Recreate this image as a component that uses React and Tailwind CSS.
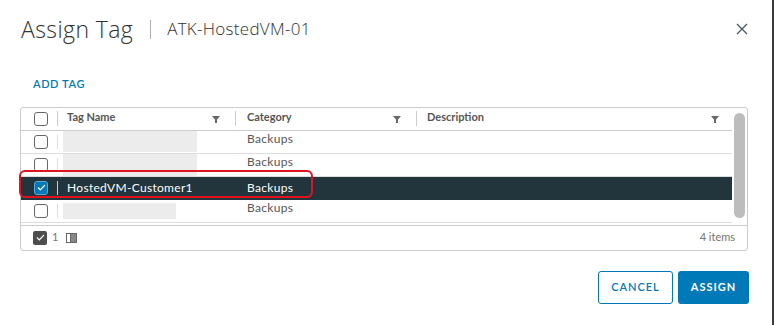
import { useState } from "react";

const rows = [
  { id: 1, name: "", category: "Backups", blur: "w-[134px] h-[21px]" },
  { id: 2, name: "", category: "Backups", blur: "w-[134px] h-[22px]" },
  { id: 3, name: "HostedVM-Customer1", category: "Backups" },
  { id: 4, name: "", category: "Backups", blur: "w-[113px] h-[16px]" },
];

const FilterIcon = () => (
  <svg width="8" height="8" viewBox="0 0 8 8" className="text-[#666]">
    <path d="M0 1h8L5 4.5V8H3V4.5z" fill="currentColor" />
  </svg>
);

const Check = ({ color = "#fff" }) => (
  <svg width="9" height="7" viewBox="0 0 9 7">
    <path d="M1 3.5l2.3 2.3L8 1" stroke={color} strokeWidth="1.2" fill="none" />
  </svg>
);

const Box = ({ checked }) =>
  checked ? (
    <div className="w-[14px] h-[14px] rounded-[3px] bg-[#0079b8] border border-[#5aa9d6] flex items-center justify-center">
      <Check />
    </div>
  ) : (
    <div className="w-[14px] h-[14px] rounded-[3px] border border-[#666] bg-white" />
  );

const App = () => {
  const [selected] = useState(3);

  return (
    <div className="w-[774px] h-[325px] bg-white flex font-['Lato',sans-serif] text-[#565656]">
      <div className="flex-1 flex flex-col">
        {/* header */}
        <div className="flex items-center pl-[21px] pr-[24px] pt-[14px] h-[44px] font-['Open_Sans',sans-serif]">
          <h1 className="text-[23px] font-light tracking-[0.4px] text-[#313131]">Assign Tag</h1>
          <div className="w-px h-[19px] bg-[#b0b0b0] ml-[17px] mr-[16px]" />
          <span className="text-[17px] font-light tracking-[0.3px] text-[#313131]">ATK-HostedVM-01</span>
          <button className="ml-auto text-[#49555f]">
            <svg width="12" height="12" viewBox="0 0 12 12">
              <path d="M1 1l10 10M11 1L1 11" stroke="currentColor" strokeWidth="1.3" />
            </svg>
          </button>
        </div>

        <div className="pl-[33px] mt-[32px] text-[11px] font-semibold tracking-[0.6px] text-[#0079b8]">
          ADD TAG
        </div>

        {/* datagrid */}
        <div className="ml-[20px] mt-[14px] w-[728px] h-[144px] border border-[#ccc] rounded-[3px] flex flex-col relative">
          <div className="flex flex-1 min-h-0">
            <div className="flex-1 flex flex-col">
              <div className="flex items-center h-[23px] border-b border-[#ccc] text-[11px] font-bold text-[#565656]">
                <div className="w-[36px] pl-[13px] flex items-center"><Box /></div>
                <div className="w-px h-[15px] bg-[#ccc]" />
                <div className="w-[177px] pl-[9px] pr-[15px] flex items-center justify-between">
                  <span className="-mt-[3px]">Tag Name</span>
                  <FilterIcon />
                </div>
                <div className="w-px h-[15px] bg-[#ccc]" />
                <div className="w-[180px] pl-[11px] pr-[15px] flex items-center justify-between">
                  <span className="-mt-[3px]">Category</span>
                  <FilterIcon />
                </div>
                <div className="w-px h-[15px] bg-[#ccc]" />
                <div className="flex-1 pl-[10px] pr-[13px] flex items-center justify-between">
                  <span className="-mt-[3px]">Description</span>
                  <FilterIcon />
                </div>
              </div>
              {rows.map((r) => {
                const sel = r.id === selected;
                return (
                  <div
                    key={r.id}
                    className={`flex items-center h-[23px] border-b text-[12px] ${
                      sel ? "bg-[#22343c] text-white border-[#22343c]" : "border-[#ddd] text-[#565656]"
                    }`}
                  >
                    <div className="w-[36px] pl-[13px] flex items-center"><Box checked={sel} /></div>
                    <div className={`w-px h-[14px] ${sel ? "bg-[#ccc]" : "bg-[#ddd]"}`} />
                    <div className="w-[177px] pl-[9px] flex items-center">
                      {r.name ? (
                        <span className="font-normal tracking-[0.3px]">{r.name}</span>
                      ) : (
                        <div className={`${r.blur} bg-[#ececec] -ml-[4px]`} />
                      )}
                    </div>
                    <div className="w-px" />
                    <div className={`w-[180px] pl-[11px] tracking-[0.3px] ${sel ? "" : "-mt-[5px]"}`}>{r.category}</div>
                  </div>
                );
              })}
            </div>
            <div className="w-[15px] flex justify-center py-[5px]">
              <div className="w-[11px] rounded-[6px] bg-[#bdbdbd]" />
            </div>
          </div>
          <div className="flex items-center h-[25px] border-t border-[#ccc] mt-[2px] pl-[12px] pr-[12px] text-[11px] text-[#747474]">
            <div className="w-[14px] h-[14px] rounded-[2px] bg-[#4d4d4d] flex items-center justify-center">
              <Check />
            </div>
            <span className="ml-[5px] text-[#777]">1</span>
            <svg width="11" height="10" viewBox="0 0 11 10" className="ml-[8px]">
              <rect x="0.5" y="0.5" width="10" height="9" fill="none" stroke="#666" />
              <rect x="5" y="1" width="5" height="8" fill="#888" />
              <path d="M4.5 0.5v9" stroke="#666" />
            </svg>
            <span className="ml-auto">4 items</span>
          </div>

          {/* red annotation */}
          <div className="absolute left-[-2px] top-[62px] w-[294px] h-[28px] border-2 border-[#e0141e] rounded-[6px] pointer-events-none" />
        </div>

        {/* footer buttons */}
        <div className="flex justify-end gap-[5px] mt-[20px] pr-[23px]">
          <button className="h-[33px] w-[75px] border border-[#0079b8] rounded-[3px] text-[11px] font-semibold tracking-[1px] text-[#0079b8] bg-white">
            CANCEL
          </button>
          <button className="h-[33px] w-[71px] rounded-[3px] bg-[#0079b8] text-[11px] font-bold tracking-[1px] text-white">
            ASSIGN
          </button>
        </div>
      </div>
      <div className="w-[2px] bg-[#3a3a3a]" />
    </div>
  );
};

export default App;
